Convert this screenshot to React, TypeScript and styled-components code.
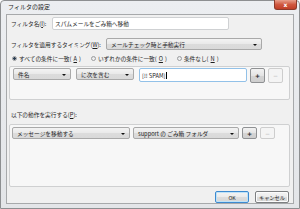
import styled, { createGlobalStyle } from 'styled-components'

const GlobalStyle = createGlobalStyle`
  html, body {
    margin: 0;
    padding: 0;
    background: #ffffff;
  }
  body {
    font-family: "Noto Sans CJK JP", "Noto Sans", sans-serif;
    color: #1e1e1e;
  }
  * {
    box-sizing: border-box;
  }
`

const App = () => {
  return (
    <>
      <GlobalStyle />
      <Frame>
        <TitleBar>
          <Title>フィルタの設定</Title>
          <CloseButton>x</CloseButton>
        </TitleBar>

        <Body>
          <FieldRow $top={2}>
            <Label $width={41}>フィルタ名(<u>I</u>):</Label>
            <TextInput $width={177} $height={13}>スパムメールをごみ箱へ移動</TextInput>
          </FieldRow>

          <FieldRow $top={8}>
            <Label $width={95}>フィルタを適用するタイミング(<u>W</u>):</Label>
            <Select $width={156}>メールチェック時と手動実行</Select>
          </FieldRow>

          <RadioRow>
            <RadioItem>
              <Radio $checked />
              すべての条件に一致(<u>A</u>)
            </RadioItem>
            <RadioItem>
              <Radio />
              いずれかの条件に一致(<u>O</u>)
            </RadioItem>
            <RadioItem>
              <Radio />
              条件なし(<u>N</u>)
            </RadioItem>
          </RadioRow>

          <GroupBox $height={34} $pad="1px 3px">
            <ConditionRow>
              <Select $width={58}>件名</Select>
              <Select $width={58}>に次を含む</Select>
              <EditGroup>
                <TextInput $width={108} $height={14} $focused>
                  [!! SPAM]<Caret />
                </TextInput>
                <SmallButton $height={15}>+</SmallButton>
                <SmallButton $height={15} disabled>−</SmallButton>
              </EditGroup>
            </ConditionRow>
          </GroupBox>

          <SectionLabel>以下の動作を実行する(<u>P</u>):</SectionLabel>

          <GroupBox $height={63} $pad="2px 2px">
            <ActionRow>
              <Select $width={118}>メッセージを移動する</Select>
              <Select $width={106}>support の ごみ箱 フォルダ</Select>
              <SmallButton $height={12}>+</SmallButton>
              <SmallButton $height={12} disabled>−</SmallButton>
            </ActionRow>
          </GroupBox>

          <Footer>
            <DialogButton $default>OK</DialogButton>
            <DialogButton>キャンセル</DialogButton>
          </Footer>
        </Body>
      </Frame>
    </>
  )
}

export default App

const Frame = styled.div`
  width: 300px;
  height: 209px;
  display: flex;
  flex-direction: column;
  padding: 0 5px 4px 5px;
  background: linear-gradient(#eceef1, #e3e5e8);
  border: 1px solid #8d8f91;
  border-radius: 4px 4px 0 0;
`

const TitleBar = styled.div`
  height: 13px;
  display: flex;
  align-items: flex-start;
  justify-content: space-between;
`

const Title = styled.div`
  font-size: 6px;
  line-height: 11px;
  padding-left: 2px;
  color: #1a1a1a;
`

const CloseButton = styled.div`
  width: 23px;
  height: 10px;
  margin: -1px -3px 0 0;
  display: flex;
  align-items: center;
  justify-content: center;
  font-family: "DejaVu Sans", sans-serif;
  font-size: 6px;
  font-weight: bold;
  color: #ffffff;
  background: linear-gradient(#e8a08c, #d0583f 50%, #c13f27);
  border: 1px solid #8c3a2a;
  border-top: none;
  border-radius: 0 0 3px 3px;
`

const Body = styled.div`
  flex: 1;
  display: flex;
  flex-direction: column;
  background: #f0f0f0;
  border: 1px solid #a7a9ab;
`

const FieldRow = styled.div<{ $top: number }>`
  display: flex;
  align-items: center;
  margin-top: ${p => p.$top}px;
  padding-left: 4px;
`

const Label = styled.div<{ $width: number }>`
  width: ${p => p.$width}px;
  font-size: 5.7px;
  white-space: nowrap;
`

const TextInput = styled.div<{ $width: number; $height: number; $focused?: boolean }>`
  width: ${p => p.$width}px;
  height: ${p => p.$height}px;
  display: flex;
  align-items: center;
  padding-left: 2px;
  font-size: 5.7px;
  white-space: nowrap;
  background: #ffffff;
  border: 1px solid ${p => (p.$focused ? '#92c1e8' : '#cfd1d3')};
  border-radius: 2px;
`

const Caret = styled.span`
  display: inline-block;
  width: 1px;
  height: 7px;
  margin-left: 0.5px;
  background: #000000;
`

const Select = styled.div<{ $width: number }>`
  position: relative;
  width: ${p => p.$width}px;
  height: 12px;
  display: flex;
  align-items: center;
  padding-left: 4px;
  font-size: 5.7px;
  white-space: nowrap;
  overflow: hidden;
  background: linear-gradient(#f3f3f3, #e9e9e9 50%, #dcdcdc 51%, #d9d9d9);
  border: 1px solid #a9a9a9;
  border-radius: 2px;

  &::after {
    content: '';
    position: absolute;
    right: 4px;
    top: 4.5px;
    border-left: 2px solid transparent;
    border-right: 2px solid transparent;
    border-top: 2px solid #111111;
  }
`

const RadioRow = styled.div`
  display: flex;
  align-items: center;
  gap: 10px;
  height: 8px;
  margin-top: 4px;
  padding-left: 5px;
`

const RadioItem = styled.div`
  display: flex;
  align-items: center;
  gap: 2px;
  font-size: 5.7px;
  white-space: nowrap;
`

const Radio = styled.span<{ $checked?: boolean }>`
  width: 5px;
  height: 5px;
  border-radius: 50%;
  border: 1px solid #9a9c9e;
  background: ${p =>
    p.$checked
      ? 'radial-gradient(circle, #2c3e52 0 1.2px, #dfe6ee 1.6px)'
      : 'linear-gradient(#e2e4e6, #f8f8f8)'};
`

const GroupBox = styled.div<{ $height: number; $pad: string }>`
  height: ${p => p.$height}px;
  margin: 4px 3px 0 2px;
  padding: ${p => p.$pad};
  background: #f7f7f7;
  border: 1px solid #cfd0d1;
  border-radius: 2px;
`

const ConditionRow = styled.div`
  display: flex;
  align-items: flex-start;
  gap: 5px;
`

const EditGroup = styled.div`
  display: flex;
  gap: 3px;
`

const ActionRow = styled.div`
  display: flex;
  align-items: flex-start;
  gap: 3px;
`

const SmallButton = styled.button<{ $height: number }>`
  width: 15px;
  height: ${p => p.$height}px;
  padding: 0;
  display: flex;
  align-items: center;
  justify-content: center;
  font-family: "DejaVu Sans", sans-serif;
  font-size: 6px;
  font-weight: bold;
  color: #222222;
  background: linear-gradient(#f2f2f2, #e4e4e4 50%, #d4d4d4 51%, #cfcfcf);
  border: 1px solid #8f9193;
  border-radius: 2px;

  &:disabled {
    color: #b5b5b5;
    font-weight: normal;
    background: #f4f4f4;
    border-color: #cdcdcd;
  }
`

const SectionLabel = styled.div`
  height: 12px;
  margin-top: 8px;
  padding-left: 4px;
  display: flex;
  align-items: center;
  font-size: 5.7px;
  white-space: nowrap;
`

const Footer = styled.div`
  display: flex;
  justify-content: flex-end;
  gap: 6px;
  margin-top: 4px;
  padding-right: 4px;
`

const DialogButton = styled.button<{ $default?: boolean }>`
  width: 34px;
  height: 12px;
  padding: 0;
  font-family: "Noto Sans CJK JP", "Noto Sans", sans-serif;
  font-size: 5.2px;
  color: #1e1e1e;
  background: linear-gradient(#f4f4f4, #ebebeb 50%, #dddddd 51%, #d6d6d6);
  border: 1px solid ${p => (p.$default ? '#3d8ad0' : '#7d7f81')};
  box-shadow: ${p => (p.$default ? 'inset 0 0 0 1px #bfe2f7' : 'inset 0 0 0 1px #fbfbfb')};
  border-radius: 2px;
`
